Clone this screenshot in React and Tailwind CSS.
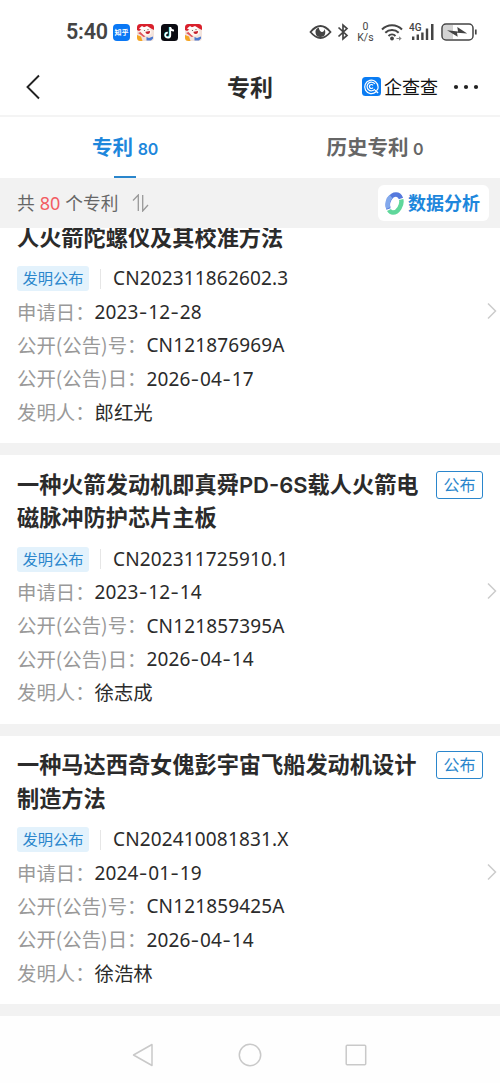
/* ── Data ───────────────────────────────────────────────────── */
const PATENTS = [
  {
    title: ['人火箭陀螺仪及其校准方法'],
    applyNo: 'CN202311862602.3',
    applyDate: '2023-12-28',
    pubNo: 'CN121876969A',
    pubDate: '2026-04-17',
    inventor: '郎红光',
  },
  {
    title: ['一种火箭发动机即真舜PD-6S载人火箭电', '磁脉冲防护芯片主板'],
    status: '公布',
    applyNo: 'CN202311725910.1',
    applyDate: '2023-12-14',
    pubNo: 'CN121857395A',
    pubDate: '2026-04-14',
    inventor: '徐志成',
  },
  {
    title: ['一种马达西奇女傀彭宇宙飞船发动机设计', '制造方法'],
    status: '公布',
    applyNo: 'CN202410081831.X',
    applyDate: '2024-01-19',
    pubNo: 'CN121859425A',
    pubDate: '2026-04-14',
    inventor: '徐浩林',
  },
];

/* ── Status bar ─────────────────────────────────────────────── */
function MascotIcon() {
  return (
    <svg viewBox="0 0 17 17" className="size-[17px]">
      <rect width="17" height="17" rx="3.5" fill="#f3e3dc" />
      <path d="M0 6V3.500A3.500 3.500 0 0 1 3.500 0h10A3.500 3.500 0 0 1 17 3.500V6l-4-2-6-.5L2 7z" fill="#d9202c" />
      <path d="M2 4.500l3-2.500 2 1.200L10 2l4 2.500-4 .5-5 1z" fill="#fff" />
      <ellipse cx="9" cy="8" rx="5.500" ry="3.800" fill="#fff6f1" />
      <path d="M8.500 7.800l4.500-.8c.2 1.800-.8 3-2.200 3S8.500 9.300 8.500 7.800z" fill="#c51f2b" />
      <circle cx="7.500" cy="6.500" r=".6" fill="#555" />
      <circle cx="11" cy="5.600" r=".6" fill="#555" />
      <path d="M0 11l4 1.500L5.500 17h-2A3.500 3.500 0 0 1 0 13.500z" fill="#f5a623" />
      <path d="M9.500 13l2.500 1 4-1.500v2l-2 2H9.500z" fill="#4a78d0" />
      <path d="M1 9l3 2 2.500 2 2-.5-2-1.500-3-3z" fill="#e0525a" />
    </svg>
  );
}

function StatusBar() {
  return (
    <div className="h-[58px] pt-[6px] pl-[66px] pr-[23px] flex items-center justify-between text-[#444]">
      <div className="flex items-center">
        <span className="w-[47px] font-['Roboto',sans-serif] font-semibold text-[21.500px] leading-none tracking-[-0.2px]">5:40</span>
        <div className="flex items-center gap-[7px]">
          <span className="size-[17px] rounded-[4px] bg-[#0a78f5] text-white text-[7px] leading-[16px] text-center font-bold whitespace-nowrap">知乎</span>
          <MascotIcon />
          <svg viewBox="0 0 17 17" className="size-[17px]">
            <rect width="17" height="17" rx="3.500" fill="#0b0b12" />
            <path d="M8.600 3v7.800a2.300 2.300 0 1 1-2.300-2.300" fill="none" stroke="#29dfe4" strokeWidth="1.600" />
            <path d="M9.300 3v8.200a2.500 2.500 0 1 1-2.500-2.500M9.300 3.300c.3 2.100 1.600 3.200 3.700 3.300" fill="none" stroke="#fff" strokeWidth="1.700" />
          </svg>
          <MascotIcon />
        </div>
      </div>

      <div className="flex items-center">
        <svg viewBox="0 0 23 16" className="w-[23px] h-4">
          <path d="M1.500 8Q6.500 2 11.500 2t10 6q-5 6-10 6T1.500 8z" fill="none" stroke="#444" strokeWidth="1.800" />
          <path d="M9.800 3.500a4.900 4.900 0 1 0 6.500 4.700c0-1.300-.4-2.200-1-3 0 2-1.200 3-2.700 2.700-1.700-.4-2.600-2.200-2.800-4.400z" fill="#444" />
        </svg>
        <svg viewBox="0 0 12 18" className="w-3 h-[18px] ml-[5px]">
          <path d="M1.500 4.500l8.500 8-4 3.500V2l4 3.500-8.500 8" fill="none" stroke="#444" strokeWidth="1.700" />
        </svg>
        <div className="ml-[7px] w-[19px] text-center font-['Roboto',sans-serif] text-[10.500px] tracking-[0.1px]">
          <div className="leading-[10px]">0</div>
          <div className="leading-[11px]">K/s</div>
        </div>
        <svg viewBox="0 0 22 18" className="w-[22px] h-[18px] ml-[6px]">
          <g fill="none" stroke="#444" strokeWidth="2">
            <path d="M1 6.500a14 14 0 0 1 20 0" />
            <path d="M4.300 9.800a9.500 9.500 0 0 1 13.400 0" />
            <path d="M7.500 13a5 5 0 0 1 7 0" />
          </g>
          <circle cx="11" cy="15.500" r="1.900" fill="#444" />
          <path d="M15.500 15h2.500v-1.700l2.700 2.200-2.700 2.200V16h-2.500z" fill="#888" />
        </svg>
        <svg viewBox="0 0 25 18" className="w-[25px] h-[18px] ml-[6px]">
          <text x="0" y="8" fontFamily="Roboto" fontSize="10" fontWeight="500" fill="#444">4G</text>
          <path d="M3 13.500h2.400V17H3zM7.600 11.500H10V17H7.600zM12.200 9.500h2.400V17h-2.400zM16.800 5.500h2.400V17h-2.400zM22 1h2.500v16H22z" fill="#444" />
        </svg>
        <svg viewBox="0 0 36 18" className="w-9 h-[18px] ml-[7px]">
          <path d="M4 2h8v14H4a2 2 0 0 1-2-2V4a2 2 0 0 1 2-2z" fill="#d4d4d4" />
          <rect x="1" y="1" width="31" height="16" rx="4" fill="none" stroke="#444" strokeWidth="1.500" />
          <path d="M6 7.200l11 1.200L16.300 4l9.900 6.500-10.200-.8.700 4z" fill="#444" />
          <path d="M34.800 6.500v5" stroke="#444" strokeWidth="1.700" />
        </svg>
      </div>
    </div>
  );
}

/* ── Header ─────────────────────────────────────────────────── */
function Header() {
  return (
    <header className="h-[59px] pl-[26px] pr-[21px] grid grid-cols-3 items-center border-b-2 border-[#f4f4f4]">
      <svg viewBox="0 0 14 26" className="w-[14px] h-[26px]">
        <path d="M13 1.500L1.500 13 13 24.500" fill="none" stroke="#222" strokeWidth="1.900" />
      </svg>
      <h1 className="pr-[5px] pb-px text-center text-[23px] font-bold leading-none text-[#2b2b2b]">专利</h1>
      <div className="flex items-center justify-end">
        <svg viewBox="0 0 19 19" className="size-[19px] shrink-0">
          <rect width="19" height="19" rx="3.500" fill="#0a7cf3" />
          <g fill="none" stroke="#fff" strokeWidth="1.200">
            <path d="M14 14.800A6.700 6.700 0 1 1 16.100 10c0 2-1 3.500-2.500 3.500l2.500 2.500" />
            <path d="M12.900 12a4.300 4.300 0 1 1 0-5" />
            <path d="M11 10.700a2 2 0 1 1 0-2.400" />
          </g>
        </svg>
        <span className="ml-[3px] pb-px text-[18px] leading-none whitespace-nowrap text-[#111]">企查查</span>
        <svg viewBox="0 0 26 6" className="w-[26px] h-[6px] ml-[15px] shrink-0">
          <circle cx="3" cy="3" r="2.100" fill="#222" />
          <circle cx="13" cy="3" r="2.100" fill="#222" />
          <circle cx="23" cy="3" r="2.100" fill="#222" />
        </svg>
      </div>
    </header>
  );
}

function Tabs() {
  return (
    <nav className="h-[61px] grid grid-cols-2 text-[20.500px] font-bold leading-[58px]">
      <div className="relative text-center text-[#1e87dc]">
        专利 <span className="font-['Inter',sans-serif] text-[16px] font-semibold tracking-[-0.3px]">80</span>
        <i className="absolute bottom-0 left-1/2 -ml-[11px] w-[22px] h-[2px] bg-[#2a86cc]" />
      </div>
      <div className="text-center text-[#666]">
        历史专利 <span className="font-['Inter',sans-serif] text-[16px] font-semibold">0</span>
      </div>
    </nav>
  );
}

/* ── Filter bar ─────────────────────────────────────────────── */
function FilterBar() {
  return (
    <div className="h-[50px] pl-[17px] pr-[11px] flex items-center justify-between bg-[#f2f2f2]">
      <div className="pb-px flex items-center text-[17.700px] leading-none text-[#666]">
        共<span className="mx-[5px] font-['Noto_Sans',sans-serif] text-[18px] text-[#f25c63]">80</span>个专利
        <svg viewBox="0 0 17 18" className="w-[17px] h-[18px] ml-[14px]">
          <path d="M1 6.500L6.300 1v16M10.700 1v16L16 11" fill="none" stroke="#999" strokeWidth="1.300" />
        </svg>
      </div>
      <button className="h-9 w-[111px] pl-[7px] rounded-[6px] bg-white flex items-center">
        <svg viewBox="0 0 19 23" className="w-[19px] h-[23px]">
          <g fill="none" strokeWidth="4.500">
            <path d="M3.500 17C1 10 6 2.500 11 2.500c2.500 0 4 1.500 5 4" stroke="#5579dd" />
            <path d="M16.200 7.500C17.500 13 13 20.500 8 20.500c-2 0-3.200-1-4-2.500" stroke="#5fd79b" />
            <path d="M3.500 16C1.500 12 3 7 6 4.500" stroke="#83a9ec" />
          </g>
        </svg>
        <span className="ml-[4px] pb-[2px] text-[18px] font-bold leading-none whitespace-nowrap text-[#1e87dc]">数据分析</span>
      </button>
    </div>
  );
}

/* ── Patent card ────────────────────────────────────────────── */
// Inter has the wider hyphen that the dates need
function Code({ children }) {
  return (
    <span className="font-['Noto_Sans',sans-serif] text-[19px] tracking-[0.150px] text-[#2b2b2b]">
      {children.split('-').map((part, i) => (
        <span key={i}>
          {i > 0 && <span className="font-['Inter',sans-serif] tracking-[0.800px]">-</span>}
          {part}
        </span>
      ))}
    </span>
  );
}

function Row({ label, children, arrow }) {
  return (
    <div className="h-[33.400px] flex items-center leading-none">
      <span className="pb-[2px] text-[#999] whitespace-nowrap">{label}：</span>
      {children}
      {arrow && (
        <svg viewBox="0 0 10 18" className="w-[10px] h-[18px] ml-auto -mr-[14px] -mt-[3px]">
          <path d="M1 1.500L8.500 9 1 16.500" fill="none" stroke="#ccc" strokeWidth="1.500" />
        </svg>
      )}
    </div>
  );
}

function PatentCard({ patent }) {
  return (
    <article className="px-[17px] pt-[11.600px] pb-[14.200px] bg-white text-[19.400px]">
      <div className="flex items-start justify-between">
        <h2 className="text-[22.200px] font-bold leading-[33.400px] text-[#2b2b2b] whitespace-nowrap">
          {patent.title.map((line) => (
            <div key={line}>
              {line.split('PD-6S').map((part, i) => (
                <span key={i}>
                  {i > 0 && <span className="font-['Inter',sans-serif] font-semibold text-[22px] leading-none">PD-6S</span>}
                  {part}
                </span>
              ))}
            </div>
          ))}
        </h2>
        {patent.status && (
          <span className="mt-[4px] w-[47px] h-7 shrink-0 rounded-[3px] border border-[#2a86cc] text-center text-[16px] leading-[24px] text-[#2a86cc]">
            {patent.status}
          </span>
        )}
      </div>
      <div className="mt-[9.200px]">
        <div className="h-[33.400px] flex items-center leading-none">
          <span className="w-[72px] h-[25px] rounded-[3px] bg-[#e3f2fc] text-center text-[15.300px] leading-[22px] text-[#2a86cc]">发明公布</span>
          <i className="ml-[11px] mr-[12px] w-px h-5 bg-[#e6e6e6]" />
          <Code>{patent.applyNo}</Code>
        </div>
        <Row label="申请日" arrow><Code>{patent.applyDate}</Code></Row>
        <Row label="公开(公告)号"><Code>{patent.pubNo}</Code></Row>
        <Row label="公开(公告)日"><Code>{patent.pubDate}</Code></Row>
        <Row label="发明人"><span className="pb-[2px] text-[#2b2b2b]">{patent.inventor}</span></Row>
      </div>
    </article>
  );
}

/* ── System navigation ──────────────────────────────────────── */
function SystemNav() {
  return (
    <div className="flex-1 px-[132px] pt-[11px] flex items-center justify-between bg-[#fefefe]">
      <svg viewBox="0 0 22 24" className="w-[22px] h-6">
        <path d="M20 1.500v21L1.500 12z" fill="none" stroke="#c9c9c9" strokeWidth="1.500" strokeLinejoin="round" />
      </svg>
      <svg viewBox="0 0 24 24" className="size-6 ml-[2px]">
        <circle cx="12" cy="12" r="10.700" fill="none" stroke="#c9c9c9" strokeWidth="1.500" />
      </svg>
      <svg viewBox="0 0 24 24" className="size-6">
        <rect x="2.200" y="2.200" width="19.500" height="19.500" rx="1" fill="none" stroke="#c9c9c9" strokeWidth="1.500" />
      </svg>
    </div>
  );
}

export default function App() {
  return (
    <div className="w-[500px] h-[1083px] flex flex-col overflow-hidden bg-white font-['Noto_Sans_CJK_SC',sans-serif]">
      <StatusBar />
      <Header />
      <Tabs />
      <FilterBar />
      {/* list is scrolled, so the first card starts under the filter bar */}
      <main className="h-[788px] shrink-0 overflow-hidden bg-[#f2f2f2]">
        <div className="-mt-[20px] flex flex-col gap-[11.800px]">
          {PATENTS.map((p) => <PatentCard key={p.applyNo} patent={p} />)}
        </div>
      </main>
      <SystemNav />
    </div>
  );
}
